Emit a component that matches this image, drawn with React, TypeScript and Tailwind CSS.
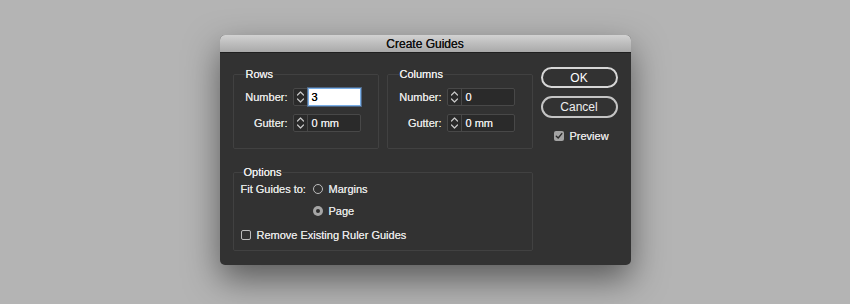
import React from "react"

function Spinner() {
  return (
    <svg width="9" height="14" viewBox="0 0 9 14" fill="none" stroke="#c8c8c8" strokeWidth="1.2" strokeLinecap="round" strokeLinejoin="round">
      <path d="M1.5 5 L4.5 2 L7.5 5" />
      <path d="M1.5 9 L4.5 12 L7.5 9" />
    </svg>
  )
}

function Field({ value, active }: { value: string; active?: boolean }) {
  return (
    <div className="ml-[5px] flex h-[18px] w-[68px] rounded-[2px] border border-[#484848] bg-[#2a2a2a]">
      <div className="flex w-[14px] items-center justify-center border-r border-[#484848]">
        <Spinner />
      </div>
      {active ? (
        <div className="-my-[1px] -mr-[1px] flex flex-1 items-center border border-[#79aee6] bg-white pl-[3px] text-[11px] text-black shadow-[0_0_0_1px_rgba(110,165,230,0.45)]">
          {value}
        </div>
      ) : (
        <div className="flex flex-1 items-center pl-[4px] text-[11px] text-[#e6e6e6]">{value}</div>
      )}
    </div>
  )
}

function FieldRow({ label, value, active, className }: { label: string; value: string; active?: boolean; className?: string }) {
  return (
    <div className={"flex items-center " + (className ?? "")}>
      <span className="w-[54px] text-right text-[11px] leading-[13px] text-[#e4e4e4]">{label}</span>
      <Field value={value} active={active} />
    </div>
  )
}

function Group({ title, active }: { title: string; active?: boolean }) {
  return (
    <div className="flex h-[75px] w-[146px] flex-col rounded-[2px] border border-[#414141]">
      <span className="-mt-[7px] ml-[11px] self-start bg-[#323232] px-[1px] text-[11px] leading-[13px] text-[#ececec]">
        {title}
      </span>
      <FieldRow label="Number:" value={active ? "3" : "0"} active={active} className="mt-[7px]" />
      <FieldRow label="Gutter:" value="0 mm" className="mt-[8px]" />
    </div>
  )
}

function Radio({ checked }: { checked?: boolean }) {
  return checked ? (
    <span className="flex h-[10px] w-[10px] items-center justify-center rounded-full bg-[#a6a6a6]">
      <span className="h-[4px] w-[4px] rounded-full bg-[#2e2e2e]" />
    </span>
  ) : (
    <span className="h-[10px] w-[10px] rounded-full border border-[#bdbdbd]" />
  )
}

export default function App() {
  return (
    <div className="flex min-h-[304px] justify-center bg-[#b4b4b4] pt-[35px] font-['Liberation_Sans',Arial,sans-serif] [text-shadow:0_0_0.4px_currentColor]">
      <div className="flex h-[230px] w-[411px] flex-col overflow-hidden rounded-[5px] bg-[#323232] shadow-[0_14px_34px_rgba(0,0,0,0.5)]">
        {/* Title bar */}
        <div className="flex h-[18px] items-center justify-center border-b border-[#1f1f1f] bg-gradient-to-b from-[#d2d2d2] to-[#a9a9a9] text-[12px] text-[#111111]">
          Create Guides
        </div>

        <div className="flex pl-[13px] pr-[12px] pt-[14px]">
          {/* Left side */}
          <div className="flex w-[300px] flex-col pt-[7px]">
            <div className="flex gap-[8px]">
              <Group title="Rows" active />
              <Group title="Columns" />
            </div>

            <div className="mt-[23px] flex h-[79px] flex-col rounded-[2px] border border-[#414141] text-[11px] leading-[13px] text-[#e4e4e4]">
              <span className="-mt-[7px] ml-[9px] self-start bg-[#323232] px-[1px] text-[#ececec]">Options</span>
              <div className="mt-[2px] flex h-[16px] items-center pl-[7px]">
                <span className="w-[72px]">Fit Guides to:</span>
                <Radio />
                <span className="ml-[6px]">Margins</span>
              </div>
              <div className="mt-[6px] flex h-[16px] items-center pl-[79px]">
                <Radio checked />
                <span className="ml-[6px]">Page</span>
              </div>
              <div className="mt-[8px] flex h-[16px] items-center pl-[7px]">
                <span className="h-[10px] w-[10px] rounded-[2px] border border-[#bdbdbd]" />
                <span className="ml-[6px]">Remove Existing Ruler Guides</span>
              </div>
            </div>
          </div>

          {/* Buttons */}
          <div className="ml-[8px] flex w-[77px] flex-col">
            <button className="flex h-[21px] items-center justify-center rounded-full border-2 border-[#d6d6d6] text-[12px] text-white">
              OK
            </button>
            <button className="mt-[8px] flex h-[22px] items-center justify-center rounded-full border-2 border-[#c4c4c4] text-[12px] text-[#eeeeee]">
              Cancel
            </button>
            <div className="mt-[11px] flex h-[14px] items-center pl-[13px] text-[11px] text-[#e4e4e4]">
              <span className="flex h-[10px] w-[10px] items-center justify-center rounded-[2px] bg-[#a3a3a3]">
                <svg width="8" height="8" viewBox="0 0 8 8" fill="none" stroke="#2a2a2a" strokeWidth="1.4" strokeLinecap="round" strokeLinejoin="round">
                  <path d="M1.3 4.2 L3.2 6 L6.8 1.6" />
                </svg>
              </span>
              <span className="ml-[6px]">Preview</span>
            </div>
          </div>
        </div>
      </div>
    </div>
  )
}
